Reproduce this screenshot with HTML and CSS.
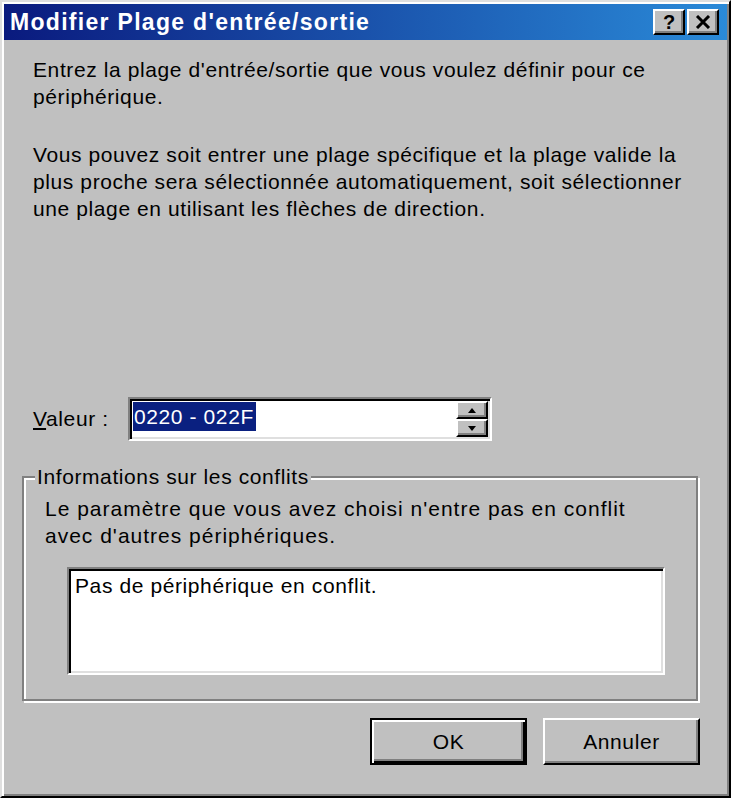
FILE: index.html
```html
<!DOCTYPE html>
<html>
<head>
  <meta charset="utf-8">
  <title>Modifier Plage d'entrée/sortie</title>
  <link rel="stylesheet" href="styles.css">
</head>
<body>
  <div class='window'>
    <div class='titlebar'>
      <span class='title'>Modifier Plage d'entrée/sortie</span>
      <div class='caption-btns'>
        <span class='cap-btn help'>?</span>
        <span class='cap-btn'>
          <svg width='16' height='14' viewBox='0 0 16 14'>
            <path d='M2 1 L14 13 M14 1 L2 13' stroke='#000' stroke-width='3'/>
          </svg>
        </span>
      </div>
    </div>

    <div class='content'>
      <p class='text'>Entrez la plage d'entrée/sortie que vous voulez définir pour ce<br>périphérique.</p>
      <p class='text'>Vous pouvez soit entrer une plage spécifique et la plage valide la<br>plus proche sera sélectionnée automatiquement, soit sélectionner<br>une plage en utilisant les flèches de direction.</p>

      <div class='value-row'>
        <label class='value-label'><u>V</u>aleur :</label>
        <div class='spin sunken'>
          <div class='spin-field'><span class='selected'>0220 - 022F</span></div>
          <div class='spin-btns'>
            <span class='spin-btn'>
              <svg width='8' height='5' viewBox='0 0 8 5'><path d='M4 0 L8 5 L0 5 Z' fill='#000'/></svg>
            </span>
            <span class='spin-btn'>
              <svg width='8' height='5' viewBox='0 0 8 5'><path d='M0 0 L8 0 L4 5 Z' fill='#000'/></svg>
            </span>
          </div>
        </div>
      </div>

      <fieldset class='conflicts'>
        <legend>Informations sur les conflits</legend>
        <p class='group-text'>Le paramètre que vous avez choisi n'entre pas en conflit<br>avec d'autres périphériques.</p>
        <div class='listbox sunken'>Pas de périphérique en conflit.</div>
      </fieldset>

      <div class='actions'>
        <span class='btn default'>OK</span>
        <span class='btn'>Annuler</span>
      </div>
    </div>
  </div>
</body>
</html>
```

FILE: styles.css
```css
* {
  box-sizing: border-box;
}
body, html {
  margin: 0;
  padding: 0;
  background: #c0c0c0;
}
body {
  font-family: "Liberation Sans", Arial, sans-serif;
  font-size: 21px;
  letter-spacing: 0.6px;
  color: #000;
}
.window {
  width: 731px;
  height: 798px;
  display: flex;
  flex-direction: column;
  padding: 2px;
  background: #c0c0c0;
  border: 2px solid;
  border-color: #dfdfdf #000 #000 #dfdfdf;
  box-shadow: inset 2px 2px #fff, inset -2px -2px #808080;
}
.titlebar {
  height: 36px;
  flex: none;
  display: flex;
  align-items: center;
  justify-content: space-between;
  padding: 0 8px 0 6px;
  background: linear-gradient(to right, #0a1a7e, #2a8ad8);
}
.title {
  color: #fff;
  font-weight: bold;
  font-size: 23px;
  letter-spacing: 1.3px;
}
.caption-btns {
  display: flex;
  gap: 2px;
}
.cap-btn {
  width: 32px;
  height: 26px;
  display: flex;
  align-items: center;
  justify-content: center;
  background: #c0c0c0;
  border: 2px solid;
  border-color: #fff #000 #000 #fff;
  box-shadow: inset -2px -2px #808080;
}
.help {
  font-weight: bold;
  font-size: 20px;
  letter-spacing: 0;
}
.content {
  flex: 1;
  display: flex;
  flex-direction: column;
  padding: 16px 29px 0 18px;
}
.text {
  margin: 0 0 0 11px;
  line-height: 27px;
  white-space: nowrap;
}
.text + .text {
  margin-top: 31px;
}
.value-row {
  display: flex;
  align-items: center;
  margin-top: 175px;
  padding-left: 11px;
}
.value-label {
  width: 95px;
}
.sunken {
  background: #fff;
  border: 2px solid;
  border-color: #808080 #fff #fff #808080;
  box-shadow: inset 2px 2px #000, inset -2px -2px #dfdfdf;
}
.spin {
  width: 364px;
  height: 44px;
  display: flex;
  padding: 2px;
}
.spin-field {
  flex: 1;
  padding: 1px;
}
.selected {
  display: inline-block;
  line-height: 29px;
  padding: 0 2px 0 1px;
  color: #fff;
  background: #0a2080;
}
.spin-btns {
  width: 32px;
  display: flex;
  flex-direction: column;
}
.spin-btn {
  flex: 1;
  display: flex;
  align-items: center;
  justify-content: center;
  background: #c0c0c0;
  border: 2px solid;
  border-color: #fff #000 #000 #fff;
  box-shadow: inset -2px -2px #808080;
}
.conflicts {
  margin: 22px 0 0 0;
  padding: 5px 31px 24px 21px;
  border: 2px solid #808080;
  box-shadow: inset 2px 2px #fff, 2px 2px #fff;
}
.conflicts legend {
  margin-left: -10px;
  padding: 0 2px;
  line-height: 27px;
  background: #c0c0c0;
}
.group-text {
  margin: 0;
  line-height: 27px;
  white-space: nowrap;
  letter-spacing: 1px;
}
.listbox {
  height: 108px;
  margin: 18px 0 0 22px;
  padding: 3px 6px;
  line-height: 27px;
}
.actions {
  display: flex;
  justify-content: flex-end;
  gap: 16px;
  margin-top: 17px;
  margin-right: -2px;
}
.btn {
  width: 157px;
  height: 47px;
  display: flex;
  align-items: center;
  justify-content: center;
  background: #c0c0c0;
  border: 2px solid;
  border-color: #fff #000 #000 #fff;
  box-shadow: inset -2px -2px #808080;
}
.btn.default {
  border-color: #000;
  box-shadow: inset 2px 2px #fff, inset -2px -2px #000, inset -4px -4px #808080;
}
```
